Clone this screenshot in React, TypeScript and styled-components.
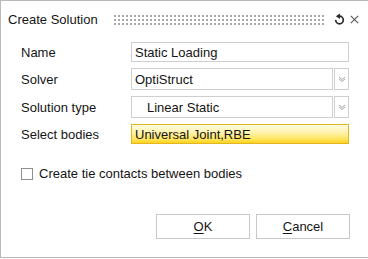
import React from 'react'
import styled, { createGlobalStyle } from 'styled-components'

const GlobalStyle = createGlobalStyle`
  html, body {
    margin: 0;
    padding: 0;
    background: #ffffff;
  }
  body {
    font-family: "Liberation Sans", Arial, sans-serif;
    font-size: 13px;
    color: #151515;
  }
`

const Dialog = styled.div`
  box-sizing: border-box;
  width: 368px;
  height: 258px;
  border: 1px solid #b9b9b9;
  border-right: none;
  display: flex;
  flex-direction: column;
  background: #fff;
`

const TitleBar = styled.div`
  display: flex;
  align-items: center;
  height: 36px;
  padding: 0 9px 0 7px;
`

const Title = styled.div`
  font-size: 13px;
  white-space: nowrap;
`

const Grip = styled.div`
  flex: 1;
  height: 12px;
  margin: 0 9px 0 15px;
  background-image: radial-gradient(circle, #a8a8a8 0.9px, transparent 1.1px);
  background-size: 4px 4px;
  background-position: 0 1px;
`

const TitleIcon = styled.svg`
  display: block;
  flex: none;
`

const Form = styled.div`
  display: grid;
  grid-template-columns: 111px 218px;
  grid-template-rows: 20px 22px 22px 20px;
  row-gap: 6px;
  padding: 5px 0 0 19px;
  align-items: center;
`

const Label = styled.div`
  padding-left: 1px;
  white-space: nowrap;
`

const TextBox = styled.div<{ $indent?: number }>`
  box-sizing: border-box;
  height: 100%;
  border: 1px solid #cfcfcf;
  display: flex;
  align-items: center;
  padding-left: ${p => 3 + (p.$indent || 0)}px;
  white-space: nowrap;
`

const Combo = styled.div`
  display: flex;
  height: 100%;
  gap: 1px;
`

const ComboField = styled(TextBox)`
  flex: 1;
`

const ComboButton = styled.div`
  box-sizing: border-box;
  width: 15px;
  height: 100%;
  border: 1px solid #cfcfcf;
  display: flex;
  align-items: center;
  justify-content: center;
`

const Selection = styled(TextBox)`
  border-color: #e2b623;
  background: linear-gradient(#fffbe0 0%, #fff2a8 45%, #ffe35a 80%, #ffd21f 100%);
`

const CheckRow = styled.label`
  display: flex;
  align-items: center;
  gap: 6px;
  margin: 22px 0 0 20px;
`

const CheckBox = styled.span`
  box-sizing: border-box;
  width: 12px;
  height: 12px;
  border: 1px solid #8f8f8f;
  background: #fff;
`

const Buttons = styled.div`
  display: flex;
  justify-content: flex-end;
  gap: 6px;
  margin-top: 33px;
  padding-right: 18px;
`

const Button = styled.button`
  box-sizing: border-box;
  width: 94px;
  height: 25px;
  border: 1px solid #c8c8c8;
  background: #fff;
  font-family: "Liberation Sans", Arial, sans-serif;
  font-size: 13px;
  color: #151515;
  padding: 0;
  u {
    text-underline-offset: 2px;
  }
`

function Chevron() {
  return (
    <svg width="8" height="6" viewBox="0 0 8 6">
      <path d="M1 1 L4 3.5 L7 1 M1 3 L4 5.5 L7 3" fill="none" stroke="#a9a9a9" strokeWidth="1" />
    </svg>
  )
}

export default function App(): React.ReactElement {
  return (
    <>
      <GlobalStyle />
      <Dialog>
        <TitleBar>
          <Title>Create Solution</Title>
          <Grip />
          <TitleIcon width="11" height="12" viewBox="0 0 11 12">
            <path d="M5.5 3.2 A3.8 3.8 0 1 1 1.7 7" fill="none" stroke="#2a2a2a" strokeWidth="1.7" />
            <path d="M6 0.4 L6 6 L1.8 3.2 Z" fill="#2a2a2a" />
          </TitleIcon>
          <TitleIcon width="9" height="9" viewBox="0 0 9 9" style={{ marginLeft: 5 }}>
            <path d="M0.8 0.8 L8.2 8.2 M8.2 0.8 L0.8 8.2" stroke="#555" strokeWidth="1.1" />
          </TitleIcon>
        </TitleBar>
        <Form>
          <Label>Name</Label>
          <TextBox>Static Loading</TextBox>
          <Label>Solver</Label>
          <Combo>
            <ComboField>OptiStruct</ComboField>
            <ComboButton><Chevron /></ComboButton>
          </Combo>
          <Label>Solution type</Label>
          <Combo>
            <ComboField $indent={12}>Linear Static</ComboField>
            <ComboButton><Chevron /></ComboButton>
          </Combo>
          <Label>Select bodies</Label>
          <Selection>Universal Joint,RBE</Selection>
        </Form>
        <CheckRow>
          <CheckBox />
          Create tie contacts between bodies
        </CheckRow>
        <Buttons>
          <Button><u>O</u>K</Button>
          <Button><u>C</u>ancel</Button>
        </Buttons>
      </Dialog>
    </>
  )
}
